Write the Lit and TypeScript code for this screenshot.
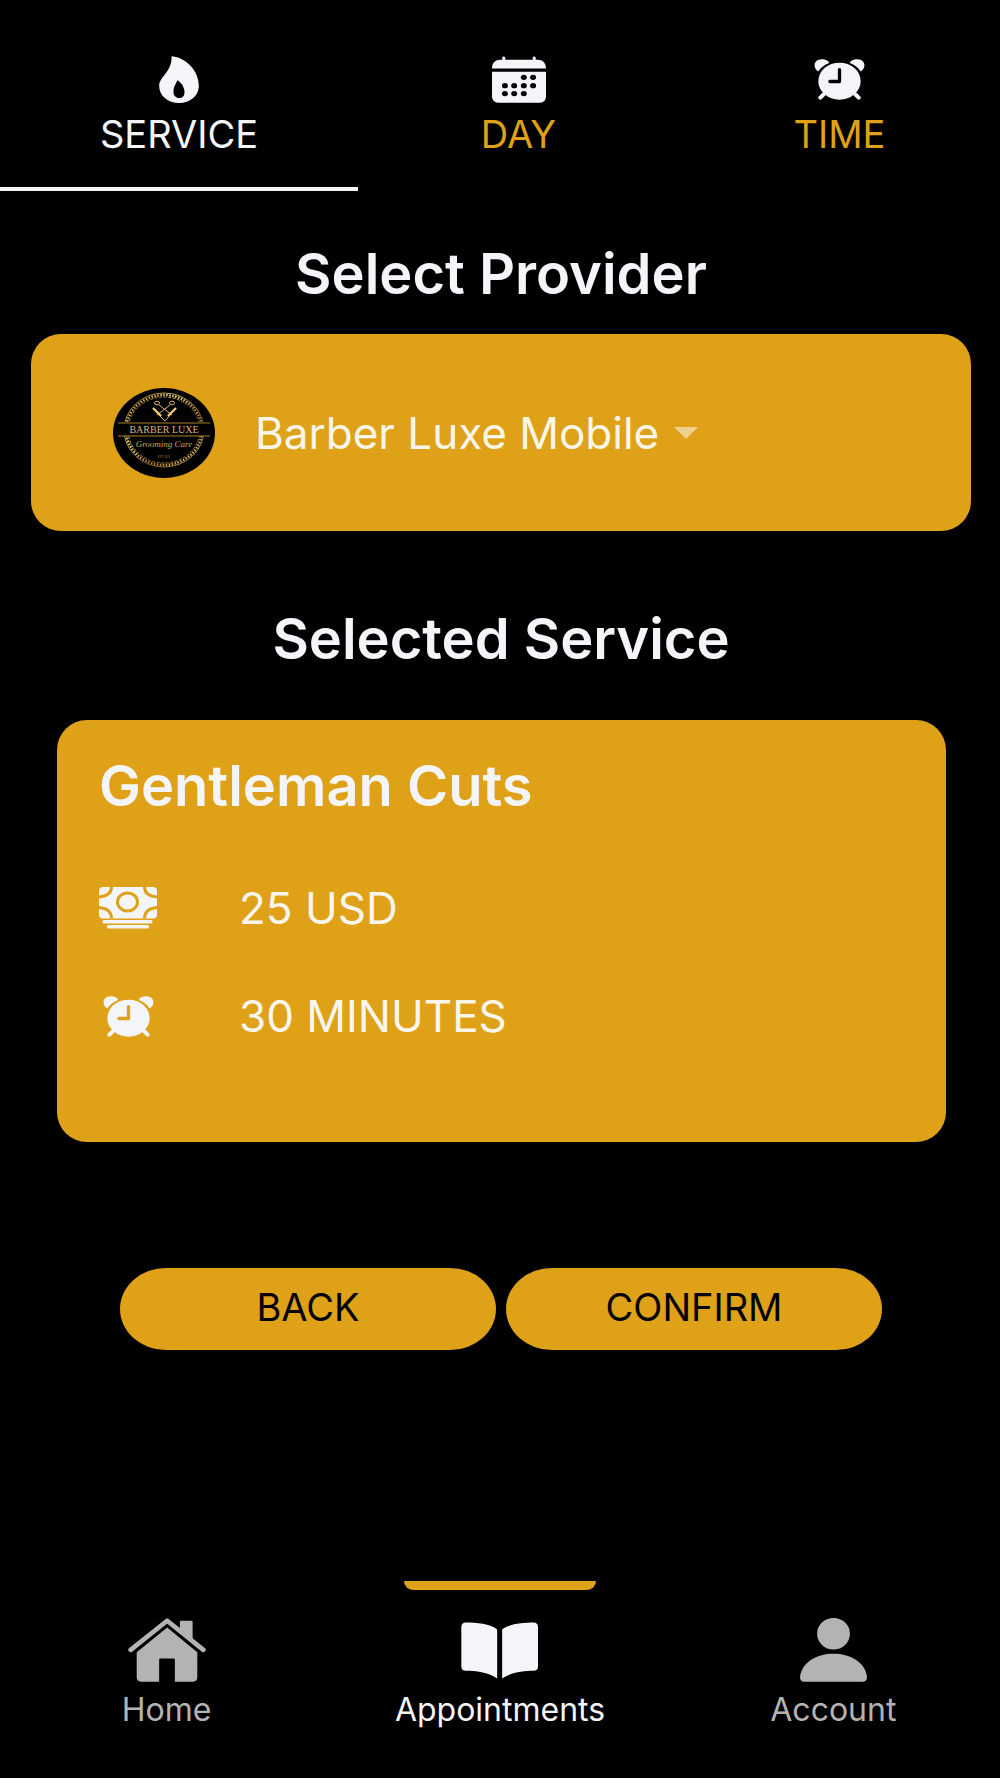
import { LitElement, html, css, svg } from "lit";
import { customElement, state } from "lit/decorators.js";

const flame = html`<svg class="icon" width="40" height="47" viewBox="478 78 119 141" aria-hidden="true">
  <path fill="currentColor" fill-rule="evenodd" d="M515 79C548 80 597 115 597 168C597 198 570 219 538 219C504 219 478 197 478 168C478 140 518 125 515 79ZM533 151C528 162 521 170 521 186C521 197 528 204 538 204C548 204 554 198 554 186C554 170 543 157 533 151Z"/>
</svg>`;

const dots = [[221, 142], [249, 142], [164, 167], [192, 167], [221, 167], [249, 167], [164, 191], [192, 191], [221, 191]];

const calendar = html`<svg class="icon" width="54" height="47" viewBox="125 78 163 141" aria-hidden="true">
  <path fill="currentColor" d="M125 115C125 98 135 89 150 89H156V82Q156 79 160 79T165 82V89H248V82Q248 79 252 79T257 82V89H263C278 89 288 98 288 115Z"/>
  <path fill="currentColor" d="M125 125H288V199Q288 219 266 219H147Q125 219 125 199Z"/>
  ${dots.map(([x, y]) => svg`<ellipse class="cut-fill" cx=${x} cy=${y} rx="9" ry="8"/>`)}
</svg>`;

const alarm = html`<svg class="icon" width="51" height="41" viewBox="1095 87 152 124" aria-hidden="true">
  <g fill="currentColor">
    <ellipse cx="1171" cy="154" rx="64" ry="56"/>
    <path d="M1107 125C1089 113 1092 88 1118 88C1129 88 1138 93 1140 99C1125 104 1114 113 1107 125Z"/>
    <path d="M1235 125C1253 113 1250 88 1224 88C1213 88 1204 93 1202 99C1217 104 1228 113 1235 125Z"/>
  </g>
  <path stroke="currentColor" stroke-width="12" stroke-linecap="round" d="M1127 190L1113 204M1215 190L1229 204"/>
  <path class="cut-line" stroke-width="10" stroke-linecap="round" stroke-linejoin="round" d="M1171 119V155H1142"/>
</svg>`;

const cash = html`<svg class="icon" width="58" height="42" viewBox="0 0 116 84" aria-hidden="true">
  <g fill="currentColor">
    <rect width="116" height="63" rx="8"/>
    <rect x="7" y="66" width="100" height="7" rx="3"/>
    <rect x="16" y="76" width="84" height="7" rx="3"/>
  </g>
  <g class="cut-line" stroke-width="6">
    <ellipse cx="57" cy="30" rx="20" ry="18"/>
    <path d="M0 20Q25 18 25 0M116 20Q91 18 91 0M0 41Q25 43 25 63M116 41Q91 43 91 63"/>
  </g>
</svg>`;

const home = html`<svg class="icon" width="78" height="64" viewBox="115 175 233 191" aria-hidden="true">
  <path fill="none" stroke="currentColor" stroke-width="14" stroke-linecap="round" stroke-linejoin="round" d="M123 270L232 183L340 270"/>
  <path fill="currentColor" d="M270 187Q270 183 274 183H304Q308 183 308 187V244L270 212Z"/>
  <path fill="currentColor" d="M232 203L322 277V352Q322 365 309 365H255V300Q255 296 251 296H212Q208 296 208 300V365H154Q141 365 141 352V277Z"/>
</svg>`;

const book = html`<svg class="icon" width="77" height="57" viewBox="305 182 232 170" aria-hidden="true">
  <path fill="currentColor" d="M414 204C395 187 350 183 320 183Q306 183 306 197V315Q306 328 320 328C350 328 385 332 414 351Z"/>
  <path fill="currentColor" d="M429 204C448 187 493 183 523 183Q537 183 537 197V315Q537 328 523 328C493 328 458 332 429 351Z"/>
</svg>`;

const person = html`<svg class="icon" width="67" height="64" viewBox="243 175 200 191" aria-hidden="true">
  <ellipse fill="currentColor" cx="343" cy="222" rx="49" ry="47"/>
  <path fill="currentColor" d="M243 350C250 305 295 282 343 282S436 305 443 350Q443 365 430 365H256Q243 365 243 350Z"/>
</svg>`;

const logo = html`<svg class="logo" width="102" height="90" viewBox="0 0 102 90" role="img" aria-label="Barber Luxe">
  <defs>
    <linearGradient id="gilt" x1="0" x2="1" y1="0" y2="1">
      <stop offset="0" stop-color="#a87a28"/>
      <stop offset="0.35" stop-color="#f0d070"/>
      <stop offset="0.65" stop-color="#a8752c"/>
      <stop offset="1" stop-color="#ead060"/>
    </linearGradient>
  </defs>
  <ellipse cx="51" cy="45" rx="51" ry="45" fill="#000"/>
  <g fill="none" stroke="url(#gilt)">
    <ellipse cx="51" cy="42" rx="40" ry="37" stroke-width="0.8"/>
    <ellipse cx="51" cy="42" rx="38" ry="35" stroke-width="2.4" stroke-dasharray="1.6 1.4"/>
    <ellipse cx="51" cy="42" rx="36" ry="33" stroke-width="0.8" stroke-dasharray="3 1.5"/>
  </g>
  <path fill="#000" d="M5 34H97V48H5Z"/>
  <path stroke="#a87c30" stroke-width="1" d="M5 35H97M5 48H97"/>
  <g fill="none" stroke="#d8b070" stroke-width="1">
    <ellipse cx="44" cy="15" rx="2.5" ry="1.8"/>
    <ellipse cx="59" cy="15" rx="2.5" ry="1.8"/>
    <path d="M46 17L59 27M57 17L44 27M46 27L52 33L57 27"/>
    <path stroke="#f0c878" stroke-width="2.4" d="M40 20L48 28M63 20L55 28"/>
  </g>
  <text class="mark" x="51" y="45" text-anchor="middle">BARBER LUXE</text>
  <text class="script" x="51" y="59" text-anchor="middle">Grooming Care</text>
  <text class="est" x="51" y="70" text-anchor="middle">EST. 2021</text>
</svg>`;

const steps = [
  { label: "SERVICE", icon: flame },
  { label: "DAY", icon: calendar },
  { label: "TIME", icon: alarm },
];

const destinations = [
  { label: "Home", icon: home, href: "#home" },
  { label: "Appointments", icon: book, href: "#appointments" },
  { label: "Account", icon: person, href: "#account" },
];

@customElement("app-root")
export class AppRoot extends LitElement {
  @state() private step = 0;

  static styles = css`
    :host {
      --gold: #dea118;
      --light: #f4f5f8;
      --cut: #000;
      display: flex;
      flex-direction: column;
      min-height: 100vh;
      background: #000;
      color: var(--light);
      font-family: Inter, "Liberation Sans", sans-serif;
    }
    * { box-sizing: border-box; }
    button, select { font: inherit; color: inherit; border: 0; margin: 0; padding: 0; background: none; cursor: pointer; }
    .icon, .logo { display: block; flex: none; }
    .cut-fill { fill: var(--cut); }
    .cut-line { fill: none; stroke: var(--cut); }

    .steps { display: grid; grid-template-columns: 358fr 321fr 321fr; }
    .step {
      display: flex;
      flex-direction: column;
      align-items: center;
      gap: 11px;
      padding: 56px 0 33px;
      border-bottom: 4px solid transparent;
      color: var(--gold);
      font-size: 38px;
      line-height: 40px;
    }
    .step.active { color: var(--light); border-color: var(--light); }
    .step-icon { display: flex; align-items: center; height: 47px; color: var(--light); }

    main { display: flex; flex-direction: column; padding: 53px 29px 40px 31px; }
    h2, h3 { margin: 0; font-size: 56px; font-weight: 600; line-height: 60px; }
    h2 { text-align: center; }
    .card { background: var(--gold); border-radius: 30px; --cut: var(--gold); }
    .provider {
      display: flex;
      align-items: center;
      height: 197px;
      margin: 30px 0 78px;
      padding: 0 82px;
    }
    .picker { display: flex; align-items: center; gap: 14px; margin-left: 40px; color: #faf5e9; }
    .picker select { appearance: none; font-size: 44px; line-height: 56px; }
    .mark { font: 10px "Liberation Serif", serif; fill: #dcb488; }
    .script { font: italic 9px "Liberation Serif", serif; fill: #d0a850; }
    .est { font: 3px "Liberation Serif", serif; fill: #a08040; }

    .service { margin: 51px 25px 126px 26px; padding: 36px 42px 102px; }
    .facts { display: grid; gap: 60px; margin: 68px 0 0; padding: 0; list-style: none; }
    .fact { display: grid; grid-template-columns: 58px 1fr; align-items: center; column-gap: 82px; font-size: 44px; line-height: 48px; color: #faf6ee; }
    .fact .icon { justify-self: center; color: var(--light); }

    .actions { display: grid; grid-template-columns: 1fr 1fr; gap: 10px; margin: 0 89px; }
    .actions button {
      height: 82px;
      padding-bottom: 4px;
      border-radius: 46px / 41px;
      background: var(--gold);
      color: #000;
      font-size: 38px;
    }

    nav { display: grid; grid-template-columns: repeat(3, 1fr); margin-top: auto; }
    .dest {
      display: flex;
      flex-direction: column;
      align-items: center;
      color: #b3b3b3;
      text-decoration: none;
      font-size: 32px;
      line-height: 40px;
      padding-bottom: 48px;
    }
    .dest::before { content: ""; width: 192px; height: 9px; margin-bottom: 28px; border-radius: 0 0 10px 10px; }
    .dest.current { color: var(--light); }
    .dest.current::before { background: var(--gold); }
    .dest-icon { display: flex; align-items: center; height: 64px; margin-bottom: 8px; }
  `;

  render() {
    return html`
      <header class="steps">
        ${steps.map((s, i) => html`
          <button type="button" class="step ${i === this.step ? "active" : ""}" @click=${() => (this.step = i)}>
            <span class="step-icon">${s.icon}</span>
            <span>${s.label}</span>
          </button>`)}
      </header>
      <main>
        <h2><label for="provider">Select Provider</label></h2>
        <div class="card provider">
          ${logo}
          <div class="picker">
            <select id="provider"><option>Barber Luxe Mobile</option></select>
            <svg class="icon" width="24" height="12" viewBox="0 0 24 12" aria-hidden="true"><path fill="#eed08f" d="M0 0H24L12 12Z"/></svg>
          </div>
        </div>
        <h2>Selected Service</h2>
        <section class="card service">
          <h3>Gentleman Cuts</h3>
          <ul class="facts">
            <li class="fact">${cash}<span>25 USD</span></li>
            <li class="fact">${alarm}<span>30 MINUTES</span></li>
          </ul>
        </section>
        <div class="actions">
          <button type="button">BACK</button>
          <button type="button">CONFIRM</button>
        </div>
      </main>
      <nav>
        ${destinations.map((d, i) => html`
          <a class="dest ${i === 1 ? "current" : ""}" href=${d.href}>
            <span class="dest-icon">${d.icon}</span>
            <span>${d.label}</span>
          </a>`)}
      </nav>
    `;
  }
}
